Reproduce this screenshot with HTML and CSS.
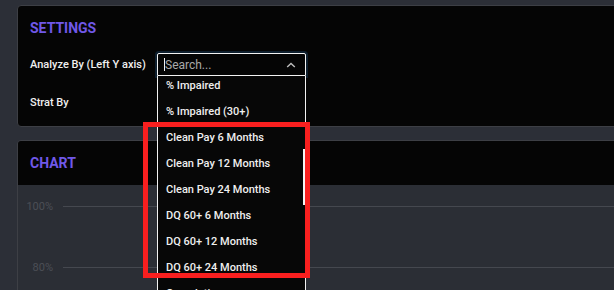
FILE: index.html
```html
<!DOCTYPE html>
<html>
<head>
<meta charset="utf-8">
<link rel="stylesheet" href="styles.css">
</head>
<body>
<div class="page">
  <section class="card settings">
    <h2 class="card-title">SETTINGS</h2>
    <div class="field-row">
      <label class="field-label">Analyze By (Left Y axis)</label>
      <div class="select is-open">
        <div class="select-input">
          <span class="caret"></span>
          <span class="placeholder">Search...</span>
          <svg class="chevron" width="10" height="6" viewBox="0 0 10 6"><polyline points="1.2,5 5,1.4 8.8,5" fill="none" stroke="#bdbdbd" stroke-width="1.4"/></svg>
        </div>
        <div class="select-menu">
          <div class="menu-list">
            <div class="menu-item">% Impaired</div>
            <div class="menu-item">% Impaired (30+)</div>
            <div class="menu-item">Clean Pay 6 Months</div>
            <div class="menu-item">Clean Pay 12 Months</div>
            <div class="menu-item">Clean Pay 24 Months</div>
            <div class="menu-item">DQ 60+ 6 Months</div>
            <div class="menu-item">DQ 60+ 12 Months</div>
            <div class="menu-item">DQ 60+ 24 Months</div>
            <div class="menu-item">Cumulative</div>
          </div>
          <div class="scroll-thumb"></div>
        </div>
      </div>
    </div>
    <div class="field-row">
      <label class="field-label">Strat By</label>
      <div class="select">
        <div class="select-input"></div>
      </div>
    </div>
  </section>

  <section class="card chart">
    <div class="chart-header">
      <h2 class="card-title">CHART</h2>
    </div>
    <div class="chart-body">
      <div class="grid-row"><span class="axis-label">100%</span><span class="grid-line"></span></div>
      <div class="grid-row"><span class="axis-label">80%</span><span class="grid-line"></span></div>
    </div>
  </section>
</div>
<div class="highlight"></div>
</body>
</html>
```

FILE: styles.css
```css
html, body {
  margin: 0;
  padding: 0;
  background: #2c2f37;
  overflow: hidden;
  height: 290px;
}

body {
  font-family: Roboto, "Liberation Sans", Arial, sans-serif;
  color: #ececec;
  position: relative;
}

.page {
  padding: 5px 0 0 17px;
  display: flex;
  flex-direction: column;
  gap: 13px;
  width: 700px;
}

.card {
  border: 1px solid #3d3f45;
  border-radius: 4px;
  background: #050505;
}

.settings {
  padding: 14px 12px 12px 12px;
}

.card-title {
  margin: 0;
  font-size: 14px;
  line-height: 16px;
  font-weight: 700;
  color: #7058e8;
}

.settings .card-title {
  margin-bottom: 17px;
}

.field-row {
  display: flex;
  align-items: center;
  height: 23px;
}

.field-row + .field-row {
  margin-top: 15px;
}

.field-label {
  width: 127px;
  flex: none;
  font-size: 11px;
  font-weight: 500;
  color: #f0f0f0;
}

.select {
  position: relative;
  width: 149px;
  height: 23px;
}

.select-input {
  box-sizing: border-box;
  height: 23px;
  border: 1px solid #3a3c42;
  border-radius: 2px;
  background: #050505;
  display: flex;
  align-items: center;
  padding: 0 9px 0 6px;
}

.is-open .select-input {
  border-color: #f2f2f2;
  border-radius: 2px 2px 0 0;
  box-shadow: 0 0 0 2px #0e1f2e;
}

.caret {
  width: 1px;
  height: 13px;
  background: #f0f0f0;
  flex: none;
}

.placeholder {
  font-size: 12px;
  color: #a9a9a9;
  flex: 1;
}

.chevron {
  flex: none;
  display: block;
}

.select-menu {
  position: absolute;
  top: 23px;
  left: 0;
  right: 0;
  height: 240px;
  box-sizing: border-box;
  border-left: 1px solid #f2f2f2;
  border-right: 1px solid #f2f2f2;
  background: #070707;
  overflow: hidden;
  z-index: 5;
}

.menu-list {
  margin-top: -3px;
}

.menu-item {
  height: 26px;
  line-height: 26px;
  padding-left: 8px;
  font-size: 11px;
  font-weight: 500;
  color: #efefef;
  white-space: nowrap;
}

.scroll-thumb {
  position: absolute;
  right: 0;
  top: 73px;
  width: 2px;
  height: 56px;
  background: #f4f4f4;
}

.chart {
  background: #2b2e35;
  overflow: hidden;
}

.chart-header {
  background: #050505;
  padding: 14px 12px;
}

.chart-body {
  padding-top: 14px;
  height: 200px;
}

.grid-row {
  display: flex;
  align-items: center;
  height: 14px;
  margin-bottom: 47px;
}

.axis-label {
  width: 35px;
  flex: none;
  text-align: right;
  font-size: 11px;
  color: #4b4e56;
}

.grid-line {
  flex: 1;
  height: 1px;
  margin-left: 10px;
  background: #45484f;
}

.highlight {
  position: absolute;
  left: 143px;
  top: 122px;
  width: 167px;
  height: 156px;
  box-sizing: border-box;
  border: 5px solid #f91f1f;
  z-index: 10;
}
```
